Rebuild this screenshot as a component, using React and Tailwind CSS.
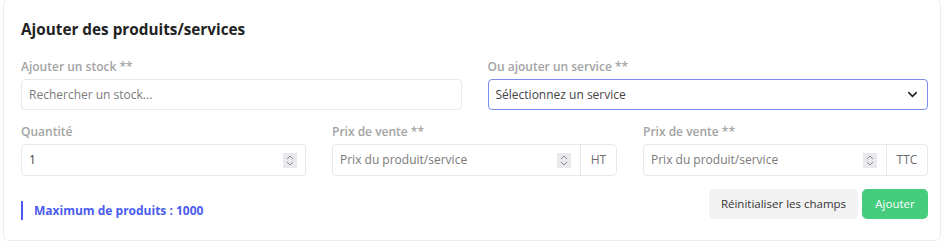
import React from "react";
import { ChevronDown } from "lucide-react";

function Spin() {
  return (
    <div className="w-[14px] h-[15px] bg-[#e9e9ed] flex items-center justify-center shrink-0">
      <svg width="8" height="11" viewBox="0 0 8 11" fill="none" stroke="#8a8a8a" strokeWidth="1">
        <path d="M1 4 L4 1 L7 4" />
        <path d="M1 7 L4 10 L7 7" />
      </svg>
    </div>
  );
}

function Label({ children }) {
  return <div className="text-[12px] font-semibold text-[#a3a3a3] leading-[18px] mb-[3px]">{children}</div>;
}

function PriceField({ unit, unitWidth }) {
  return (
    <div>
      <Label>Prix de vente **</Label>
      <div className="flex h-[32px] border border-[#e8e8ec] rounded-[4px]">
        <div className="flex-1 flex items-center pl-[7px] pr-[9px] border-r border-[#e8e8ec]">
          <span className="flex-1 text-[12px] text-[#7a7a7a]">Prix du produit/service</span>
          <Spin />
        </div>
        <div className={`${unitWidth} flex items-center justify-center text-[12px] text-[#6b6b6b]`}>{unit}</div>
      </div>
    </div>
  );
}

export default function App() {
  return (
    <div className="bg-white h-[244px] font-['Open_Sans',sans-serif]">
      <div className="ml-[3px] w-[938px] h-[242px] -mt-px border border-[#ececef] rounded-[6px] pl-[17px] pr-[12px] pt-[18px]">
        <h2 className="text-[15.3px] font-bold text-[#222] leading-[22px]">Ajouter des produits/services</h2>

        {/* stock / service */}
        <div className="grid grid-cols-2 gap-[26px] mt-[18px]">
          <div>
            <Label>Ajouter un stock **</Label>
            <div className="h-[31px] border border-[#e8e8ec] rounded-[4px] flex items-center px-[7px] text-[12px] text-[#7a7a7a]">
              Rechercher un stock...
            </div>
          </div>
          <div>
            <Label>Ou ajouter un service **</Label>
            <div className="h-[31px] border border-[#7b8cf0] rounded-[4px] flex items-center justify-between pl-[7px] pr-[7px] text-[12px] text-[#444]">
              <span>Sélectionnez un service</span>
              <ChevronDown size={15} strokeWidth={2.5} className="text-[#222]" />
            </div>
          </div>
        </div>

        {/* quantity / prices */}
        <div className="grid grid-cols-3 gap-[26px] mt-[13px]">
          <div>
            <Label>Quantité</Label>
            <div className="h-[32px] border border-[#e8e8ec] rounded-[4px] flex items-center pl-[7px] pr-[8px]">
              <span className="flex-1 text-[12px] text-[#444]">1</span>
              <Spin />
            </div>
          </div>
          <PriceField unit="HT" unitWidth="w-[35px]" />
          <PriceField unit="TTC" unitWidth="w-[40px]" />
        </div>

        {/* footer */}
        <div className="flex items-start justify-between mt-[13px]">
          <div className="flex items-center h-[19px] mt-[12px] border-l-2 border-[#4a5cf0] pl-[11px]">
            <span className="text-[12px] font-bold text-[#4a5cf0]">Maximum de produits : 1000</span>
          </div>
          <div className="flex gap-[4px]">
            <button className="h-[30px] w-[149px] rounded-[5px] bg-[#f2f2f3] text-[11.5px] text-[#333]">
              Réinitialiser les champs
            </button>
            <button className="h-[30px] w-[66px] rounded-[5px] bg-[#45cc7d] text-[11.5px] text-white">
              Ajouter
            </button>
          </div>
        </div>
      </div>
    </div>
  );
}
